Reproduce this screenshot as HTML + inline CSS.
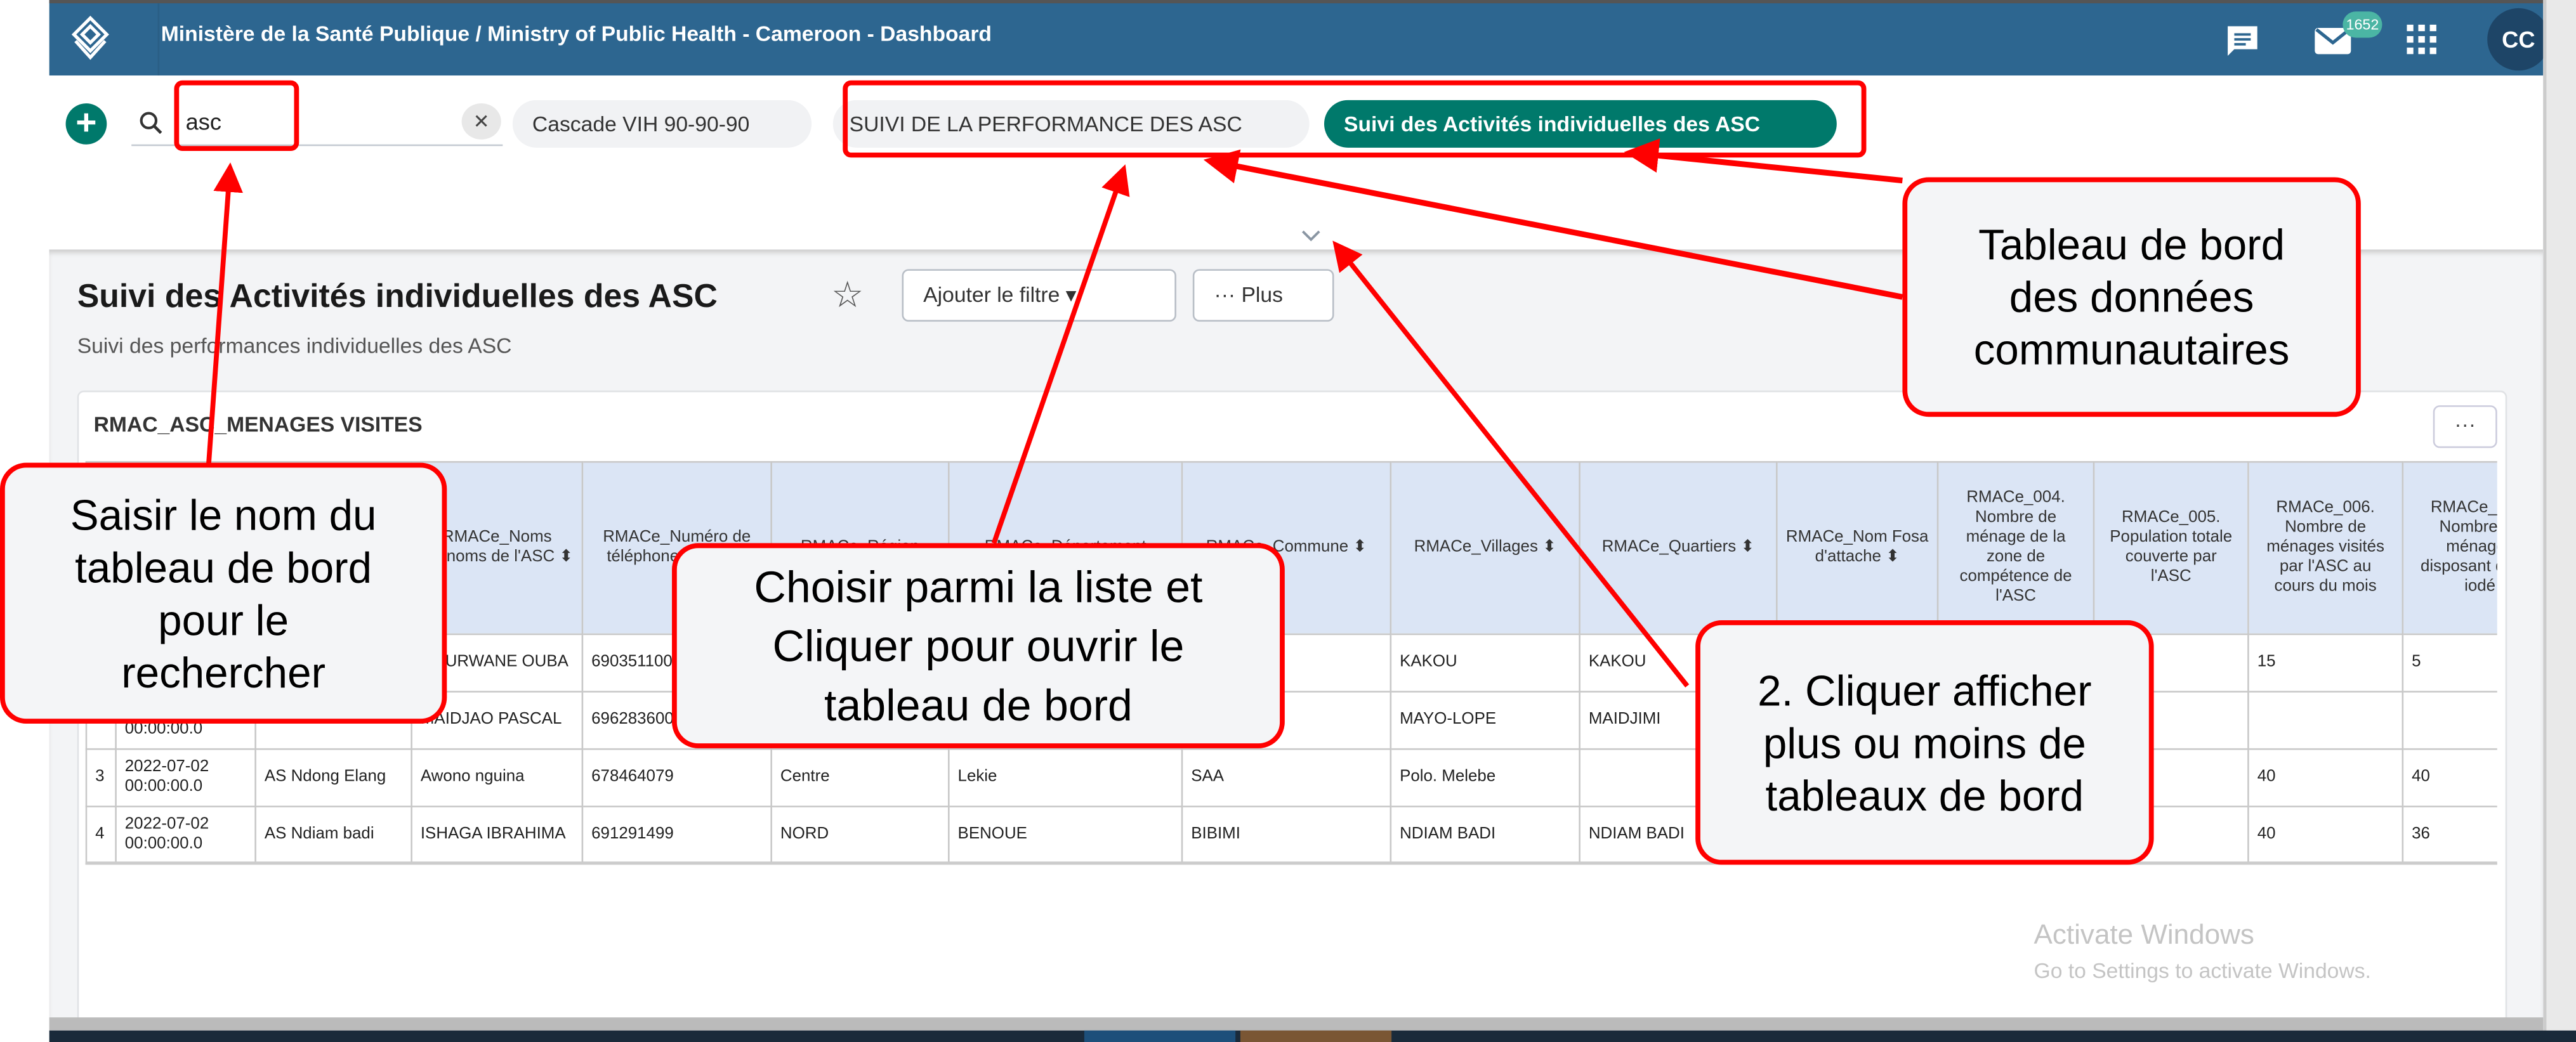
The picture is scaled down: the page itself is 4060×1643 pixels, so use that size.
<!DOCTYPE html>
<html><head><meta charset="utf-8"><style>
*{box-sizing:border-box;margin:0;padding:0}
html,body{width:4060px;height:1643px;overflow:hidden;background:#fff;font-family:"Liberation Sans",Arial,sans-serif}
#w{position:absolute;left:0;top:0;width:1568px;height:635px;transform:scale(2.5893,2.5874);transform-origin:0 0;overflow:hidden;background:#fff}
.abs{position:absolute}
.hdr{left:30px;top:0;width:1518px;height:46px;background:#2d6690;border-top:2px solid #555}
.title{left:98px;top:13px;color:#fff;font-weight:bold;font-size:13px}
.chip{position:absolute;top:61px;height:29px;border-radius:15px;background:#f1f2f4;font-size:13px;color:#333;line-height:29px;padding:0 12px;white-space:nowrap}
.content{left:30px;top:152px;width:1518px;height:476px;background:#f3f4f6;box-shadow:inset 0 3px 3px -1px #ccc}
.btn{position:absolute;top:164px;height:32px;border:1px solid #b8bec6;border-radius:4px;background:#fff;font-size:13px;color:#333;line-height:30px;padding:0 12px}
.card{left:47px;top:238px;width:1479px;height:390px;background:#fff;border:1px solid #e0e2e5;border-radius:4px 4px 0 0}
table{position:absolute;left:0;top:0;width:1504px;border-collapse:collapse;table-layout:fixed;font-size:10px;color:#222}
td,th{border:1px solid #c8c8c8;padding:0 5px;overflow:hidden;text-align:left;vertical-align:middle;line-height:12px}
th{background:#dbe5f5;font-weight:normal;height:105px;text-align:center;color:#333}
td{height:35px}
.co{position:absolute;border:3px solid #f00;border-radius:16px;background:#f4f5f7;color:#000;text-align:center;display:flex;align-items:center;justify-content:center;font-size:25px;line-height:32px}
</style></head><body><div id="w">
<div class="abs hdr"></div>
<div class="abs" style="left:96px;top:2px;width:1px;height:44px;background:#2a5f85"></div>
<svg class="abs" style="left:38px;top:8px" width="34" height="32" viewBox="0 0 34 32"><g fill="none" stroke="#fff" stroke-width="2"><path d="M17 3 L27 13 L17 23 L7 13 Z"/><path d="M17 8 L22 13 L17 18 L12 13 Z"/><path d="M8 17 L17 27 L26 17"/></g></svg>
<div class="abs title">Ministère de la Santé Publique / Ministry of Public Health - Cameroon - Dashboard</div>
<svg class="abs" style="left:1354px;top:14px" width="22" height="22" viewBox="0 0 22 22"><path d="M2 2h18v14H6l-4 4z" fill="#fff"/><path d="M6 7h10M6 10h10M6 13h7" stroke="#2d6690" stroke-width="1.5"/></svg>
<svg class="abs" style="left:1408px;top:15px" width="24" height="20" viewBox="0 0 24 20"><rect x="1" y="2" width="22" height="16" rx="2" fill="#fff"/><path d="M2 3l10 8 10-8" fill="none" stroke="#2d6690" stroke-width="2"/></svg>
<div class="abs" style="left:1426px;top:7px;width:24px;height:16px;border-radius:8px;background:#4bb5a4;color:#fff;font-size:9px;line-height:16px;text-align:center">1652</div>
<svg class="abs" style="left:1465px;top:15px" width="18" height="18" viewBox="0 0 18 18" fill="#fff"><rect x="0" y="0" width="4" height="4"/><rect x="7" y="0" width="4" height="4"/><rect x="14" y="0" width="4" height="4"/><rect x="0" y="7" width="4" height="4"/><rect x="7" y="7" width="4" height="4"/><rect x="14" y="7" width="4" height="4"/><rect x="0" y="14" width="4" height="4"/><rect x="7" y="14" width="4" height="4"/><rect x="14" y="14" width="4" height="4"/></svg>
<div class="abs" style="left:1514px;top:5px;width:38px;height:38px;border-radius:50%;background:#1e4567;color:#fff;font-weight:bold;font-size:14px;line-height:38px;text-align:center">CC</div>
<div class="abs" style="left:1548px;top:0;width:20px;height:635px;background:#e9e9e9;border-left:2px solid #ccc"></div>

<div class="abs" style="left:40px;top:63px;width:25px;height:25px;border-radius:50%;background:#00796b;color:#fff;font-size:22px;line-height:24px;text-align:center;font-weight:bold">+</div>
<svg class="abs" style="left:84px;top:67px" width="16" height="16" viewBox="0 0 16 16"><circle cx="6.5" cy="6.5" r="4.5" fill="none" stroke="#333" stroke-width="1.6"/><path d="M10 10l4 4" stroke="#333" stroke-width="1.8"/></svg>
<div class="abs" style="left:113px;top:66px;font-size:14px;color:#222">asc</div>
<div class="abs" style="left:80px;top:88px;width:226px;height:1px;background:#c4cad2"></div>
<div class="abs" style="left:281px;top:63px;width:24px;height:22px;border-radius:50%;background:#e8e8e8;font-size:12px;line-height:22px;text-align:center;color:#444">✕</div>
<div class="chip" style="left:312px;width:182px">Cascade VIH 90-90-90</div>
<div class="chip" style="left:507px;width:290px;padding:0 10px">SUIVI DE LA PERFORMANCE DES ASC</div>
<div class="chip" style="left:806px;width:312px;background:#00796b;color:#fff;font-weight:bold;top:61px">Suivi des Activités individuelles des ASC</div>
<svg class="abs" style="left:791px;top:139px" width="14" height="10" viewBox="0 0 14 10"><path d="M2 2l5 5 5-5" fill="none" stroke="#8a96a3" stroke-width="1.5"/></svg>

<div class="abs content"></div>
<div class="abs" style="left:47px;top:170px;font-size:20px;font-weight:bold;color:#1a1a1a">Suivi des Activités individuelles des ASC</div>
<div class="abs" style="left:506px;top:167px;font-size:22px;color:#555">☆</div>
<div class="btn" style="left:549px;width:167px">Ajouter le filtre ▾</div>
<div class="btn" style="left:726px;width:86px">··· Plus</div>
<div class="abs" style="left:47px;top:203px;font-size:13px;color:#555">Suivi des performances individuelles des ASC</div>

<div class="abs card"></div>
<div class="abs" style="left:57px;top:251px;font-size:13px;font-weight:bold;color:#333">RMAC_ASC_MENAGES VISITES</div>
<div class="abs" style="left:1481px;top:247px;width:39px;height:26px;border:1px solid #ccd;border-radius:4px;text-align:center;font-size:13px;line-height:22px;color:#444">···</div>
<div class="abs" style="left:52px;top:281px;width:1468px;height:246px;overflow:hidden">
<table>
<colgroup><col style="width:18px"><col style="width:85px"><col style="width:95px"><col style="width:104px"><col style="width:115px"><col style="width:108px"><col style="width:142px"><col style="width:127px"><col style="width:115px"><col style="width:120px"><col style="width:98px"><col style="width:95px"><col style="width:94px"><col style="width:94px"><col style="width:94px"></colgroup>
<tr><th></th><th>RMACe_Date</th><th>RMACe_Aire</th><th>RMACe_Noms Prénoms de l'ASC ⬍</th><th>RMACe_Numéro de téléphone de l'ASC</th><th>RMACe_Région</th><th>RMACe_Département</th><th>RMACe_Commune ⬍</th><th>RMACe_Villages ⬍</th><th>RMACe_Quartiers ⬍</th><th>RMACe_Nom Fosa d'attache ⬍</th><th>RMACe_004. Nombre de ménage de la zone de compétence de l'ASC</th><th>RMACe_005. Population totale couverte par l'ASC</th><th>RMACe_006. Nombre de ménages visités par l'ASC au cours du mois</th><th>RMACe_007. Nombre de ménages disposant de sel iodé</th></tr>
<tr><td>1</td><td>2022-07-02 00:00:00.0</td><td></td><td>NOURWANE OUBA</td><td>690351100</td><td></td><td></td><td></td><td>KAKOU</td><td>KAKOU</td><td></td><td></td><td></td><td>15</td><td>5</td></tr>
<tr><td>2</td><td>2022-07-02 00:00:00.0</td><td></td><td>MAIDJAO PASCAL</td><td>696283600</td><td></td><td></td><td></td><td>MAYO-LOPE</td><td>MAIDJIMI</td><td></td><td></td><td>5</td><td></td><td></td></tr>
<tr><td>3</td><td>2022-07-02 00:00:00.0</td><td>AS Ndong Elang</td><td>Awono nguina</td><td>678464079</td><td>Centre</td><td>Lekie</td><td>SAA</td><td>Polo. Melebe</td><td></td><td></td><td></td><td></td><td>40</td><td>40</td></tr>
<tr><td>4</td><td>2022-07-02 00:00:00.0</td><td>AS Ndiam badi</td><td>ISHAGA IBRAHIMA</td><td>691291499</td><td>NORD</td><td>BENOUE</td><td>BIBIMI</td><td>NDIAM BADI</td><td>NDIAM BADI</td><td></td><td></td><td></td><td>40</td><td>36</td></tr>
</table></div>
<div class="abs" style="left:52px;top:525px;width:1468px;height:2px;background:#ccc"></div>
<div class="abs" style="left:1238px;top:560px;font-size:17px;color:#c4c4c4">Activate Windows</div>
<div class="abs" style="left:1238px;top:584px;font-size:13px;color:#c4c4c4">Go to Settings to activate Windows.</div>
<div class="abs" style="left:30px;top:620px;width:1518px;height:8px;background:#bbb"></div>
<div class="abs" style="left:30px;top:628px;width:1538px;height:7px;background:#1a2a3a"></div>
<div class="abs" style="left:660px;top:628px;width:92px;height:7px;background:#1d4f7a"></div>
<div class="abs" style="left:755px;top:628px;width:92px;height:7px;background:#7a5634"></div>

<div class="abs" style="left:106px;top:49px;width:76px;height:43px;border:3px solid #f00;border-radius:5px"></div>
<div class="abs" style="left:513px;top:49px;width:623px;height:47px;border:3px solid #f00;border-radius:5px"></div>
<svg class="abs" style="left:0;top:0" width="1568" height="635"><defs><marker id="a" markerWidth="6" markerHeight="6" refX="5" refY="3" orient="auto"><path d="M0 0L6 3L0 6z" fill="#f00"/></marker></defs>
<g stroke="#f00" stroke-width="3" fill="none" marker-end="url(#a)">
<line x1="127" y1="283" x2="140" y2="102"/>
<line x1="605" y1="331" x2="684" y2="103"/>
<line x1="1158" y1="110" x2="992" y2="93" stroke-width="3.5"/>
<line x1="1158" y1="181" x2="736" y2="98" stroke-width="3.5"/>
<line x1="1027" y1="418" x2="813" y2="149"/>
</g></svg>
<div class="co" style="left:0;top:282px;width:272px;height:159px;font-size:26px">Saisir le nom du<br>tableau de bord<br>pour le<br>rechercher</div>
<div class="co" style="left:409px;top:331px;width:373px;height:125px;font-size:27px;line-height:36px">Choisir parmi la liste et<br>Cliquer pour ouvrir le<br>tableau de bord</div>
<div class="co" style="left:1158px;top:108px;width:279px;height:146px;font-size:26px">Tableau de bord<br>des données<br>communautaires</div>
<div class="co" style="left:1032px;top:378px;width:279px;height:149px;font-size:26px">2. Cliquer afficher<br>plus ou moins de<br>tableaux de bord</div>
</div></body></html>
